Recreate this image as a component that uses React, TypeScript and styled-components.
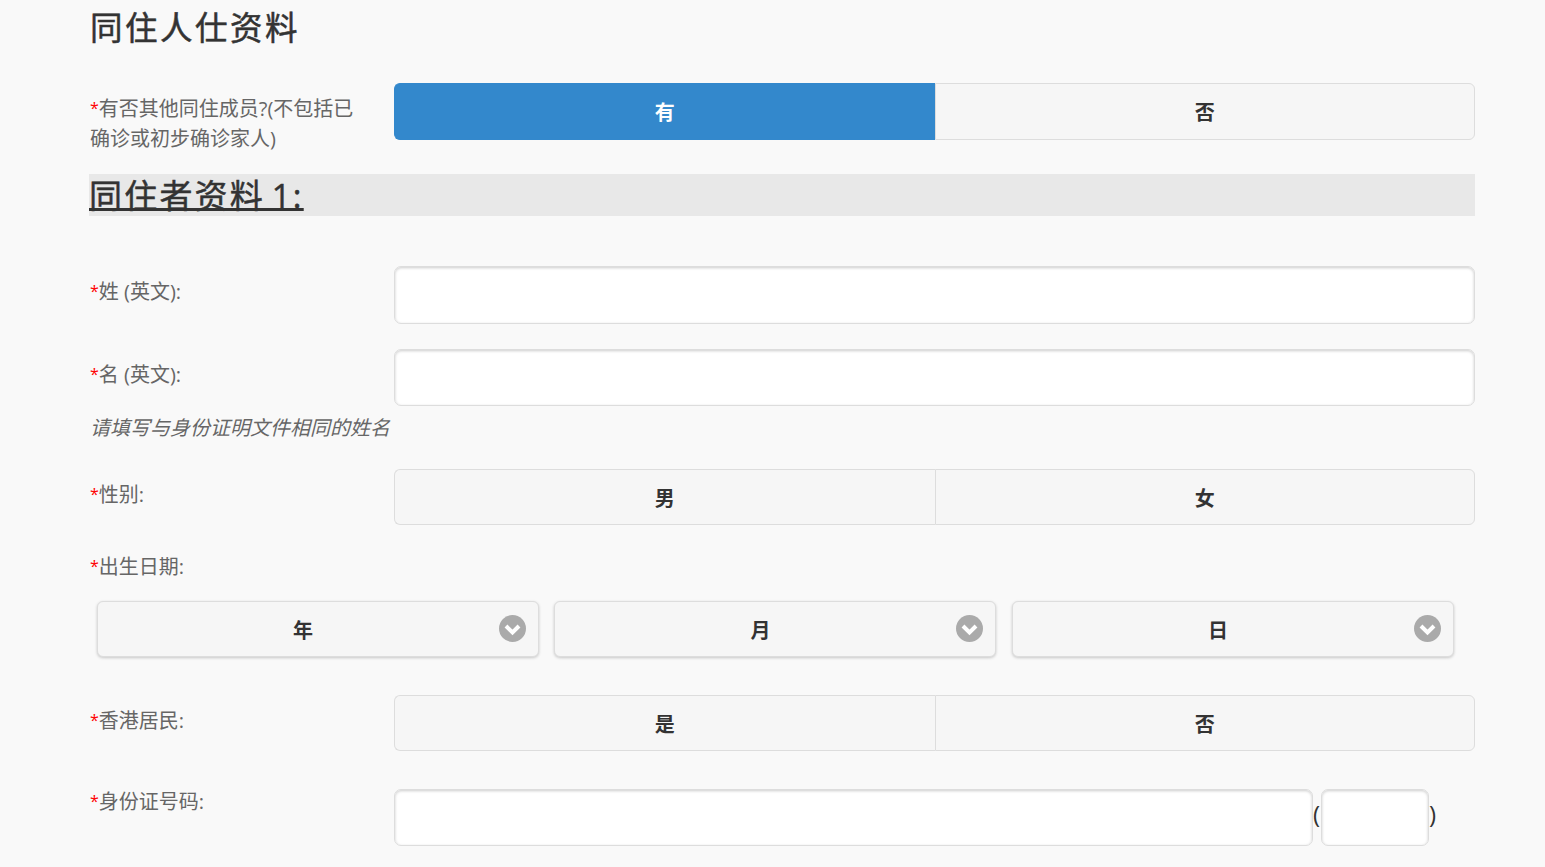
import styled, { createGlobalStyle } from "styled-components"

const GlobalStyle = createGlobalStyle`
    html, body {
        margin: 0;
        padding: 0;
        height: 867px;
        overflow: hidden;
        background-color: #f9f9f9;
        color: #333;
        font-family: "Open Sans", "Noto Sans CJK SC", sans-serif;
    }
`
const Form = styled.form`
    width: 1385px;
    margin-left: 90px;
`
const Title = styled.h2`
    margin: 0;
    height: 56px;
    font-size: 32.5px;
    line-height: 56px;
    font-weight: 400;
    letter-spacing: 2.5px;
    -webkit-text-stroke: 0.5px #333;
`
const SectionBar = styled.div`
    margin: 21px 0 50px -1px;
    height: 42px;
    background-color: #e8e8e8;
`
const SectionTitle = styled.h2`
    display: inline-block;
    margin: 0;
    padding-top: 1px;
    font-size: 33px;
    line-height: 41px;
    height: 41px;
    font-weight: 400;
    letter-spacing: 2.2px;
    word-spacing: -4px;
    text-decoration: underline;
    text-decoration-thickness: 2.5px;
    text-underline-offset: 0px;
    -webkit-text-stroke: 0.5px #333;
`
const Row = styled.div<{ $top: number }>`
    display: grid;
    grid-template-columns: 304px 1081px;
    margin-top: ${(p) => p.$top}px;
`
const Label = styled.label`
    display: block;
    padding-top: 10px;
    font-size: 20px;
    line-height: 30px;
    color: #666;
`
const WrappedLabel = styled(Label)`
    padding-top: 11px;
    padding-right: 36px;
    line-height: 29.5px;
`
const DateLabel = styled(Label)`
    margin-top: 16px;
`
const Star = styled.span`
    color: #f00;
    font-size: 16px;
    vertical-align: 2px;
`
const Hint = styled.p`
    margin: 7px 0 0;
    font-size: 20px;
    line-height: 30px;
    font-style: italic;
    color: #666;
`
const Segment = styled.div<{ $height: number }>`
    display: grid;
    grid-template-columns: 1fr 1fr;
    height: ${(p) => p.$height}px;
`
const SegmentButton = styled.button<{ $active?: boolean }>`
    border: 1px solid ${(p) => (p.$active ? "#38c" : "#ddd")};
    padding: 0;
    background-color: ${(p) => (p.$active ? "#38c" : "#f6f6f6")};
    color: ${(p) => (p.$active ? "#fff" : "#333")};
    font-family: inherit;
    font-size: 20px;
    font-weight: 700;
    &:first-child {
        border-right: 0;
        border-radius: 6px 0 0 6px;
    }
    &:last-child {
        border-radius: 0 6px 6px 0;
    }
`
const TextInput = styled.input`
    display: block;
    box-sizing: border-box;
    width: 100%;
    height: 57.5px;
    border: 1px solid #ddd;
    border-radius: 7px;
    background-color: #fff;
    box-shadow: inset 0 1px 3px rgba(0, 0, 0, 0.2);
    outline: none;
`
const SelectRow = styled.div`
    display: grid;
    grid-template-columns: repeat(3, 442px);
    column-gap: 15.5px;
    margin: 19px 0 0 6.9px;
`
const SelectBox = styled.div`
    position: relative;
    display: flex;
    align-items: center;
    justify-content: center;
    box-sizing: border-box;
    height: 56px;
    padding-right: 30px;
    border: 1px solid #ddd;
    border-radius: 6px;
    background-color: #f6f6f6;
    box-shadow: 0 1px 3px rgba(0, 0, 0, 0.2);
    font-size: 20px;
    font-weight: 700;
`
const SelectArrow = styled.svg`
    position: absolute;
    top: 13px;
    right: 12px;
    width: 27px;
    height: 27px;
`
const IdRow = styled.div`
    display: flex;
    height: 57px;
    margin-top: 13px;
    font-size: 24px;
    color: #333;
`
const IdMain = styled(TextInput)`
    width: 919px;
    height: 57px;
`
const IdCheck = styled(TextInput)`
    width: 108px;
    height: 57px;
`
const Bracket = styled.span`
    width: 8px;
    line-height: 50px;
`

function Arrow() {
    return (
        <SelectArrow viewBox="0 0 27 27">
            <circle cx="13.5" cy="13.5" r="13.5" fill="#aaa" />
            <path d="M7 11 L13.5 17.5 L20 11" fill="none" stroke="#fff" strokeWidth="4" />
        </SelectArrow>
    )
}

function Seg({ a, b, active, height = 56 }: { a: string; b: string; active?: boolean; height?: number }) {
    return (
        <Segment $height={height}>
            <SegmentButton type="button" $active={active}>{a}</SegmentButton>
            <SegmentButton type="button">{b}</SegmentButton>
        </Segment>
    )
}

export default function App() {
    return (
        <>
            <GlobalStyle />
            <Form>
                <Title>同住人仕资料</Title>
                <Row $top={27}>
                    <WrappedLabel><Star>*</Star>有否其他同住成员?(不包括已确诊或初步确诊家人)</WrappedLabel>
                    <Seg a="有" b="否" active height={57} />
                </Row>
                <SectionBar>
                    <SectionTitle>同住者资料 1:</SectionTitle>
                </SectionBar>
                <Row $top={0}>
                    <Label><Star>*</Star>姓 (英文):</Label>
                    <TextInput />
                </Row>
                <Row $top={25}>
                    <Label><Star>*</Star>名 (英文):</Label>
                    <TextInput />
                </Row>
                <Hint>请填写与身份证明文件相同的姓名</Hint>
                <Row $top={26}>
                    <Label><Star>*</Star>性别:</Label>
                    <Seg a="男" b="女" />
                </Row>
                <DateLabel><Star>*</Star>出生日期:</DateLabel>
                <SelectRow>
                    <SelectBox>年<Arrow /></SelectBox>
                    <SelectBox>月<Arrow /></SelectBox>
                    <SelectBox>日<Arrow /></SelectBox>
                </SelectRow>
                <Row $top={38}>
                    <Label><Star>*</Star>香港居民:</Label>
                    <Seg a="是" b="否" />
                </Row>
                <Row $top={25}>
                    <Label><Star>*</Star>身份证号码:</Label>
                    <IdRow>
                        <IdMain />
                        <Bracket>(</Bracket>
                        <IdCheck />
                        <Bracket>)</Bracket>
                    </IdRow>
                </Row>
            </Form>
        </>
    )
}
